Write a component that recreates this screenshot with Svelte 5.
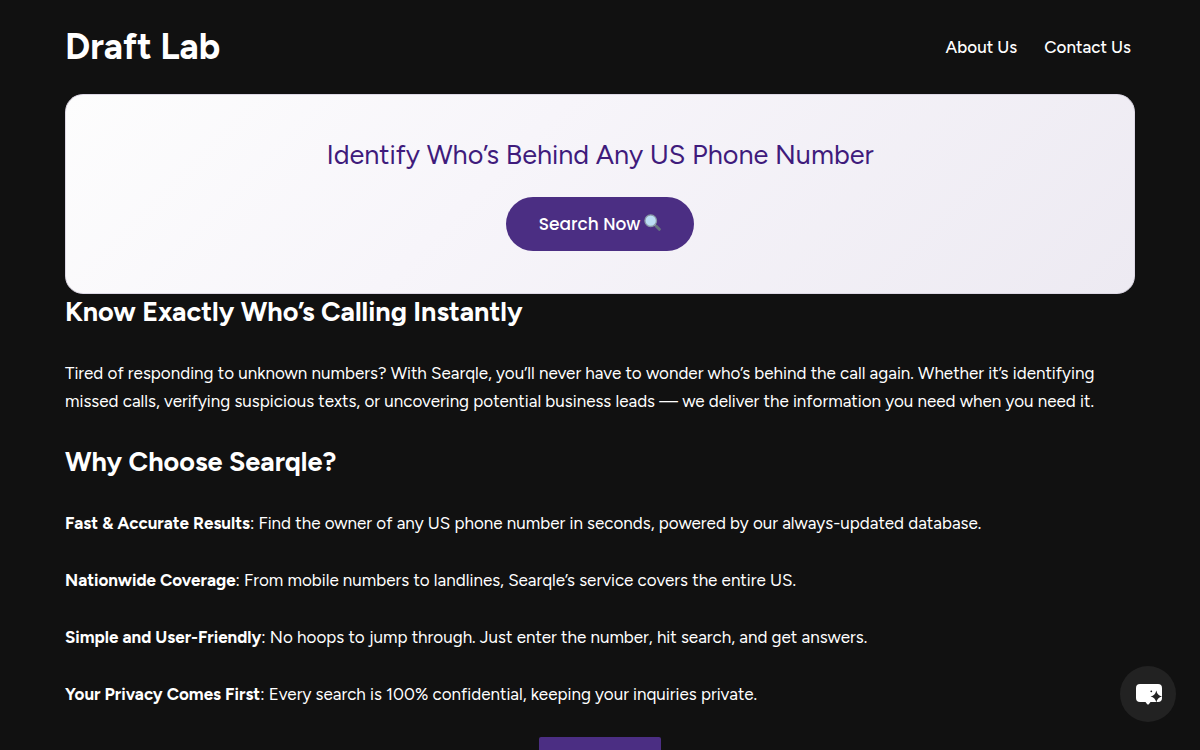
<script>
	const links = [
		{ label: "About Us", href: "#about" },
		{ label: "Contact Us", href: "#contact" }
	];

	const reasons = [
		{ title: "Fast & Accurate Results", text: "Find the owner of any US phone number in seconds, powered by our always-updated database." },
		{ title: "Nationwide Coverage", text: "From mobile numbers to landlines, Searqle’s service covers the entire US." },
		{ title: "Simple and User-Friendly", text: "No hoops to jump through. Just enter the number, hit search, and get answers." },
		{ title: "Your Privacy Comes First", text: "Every search is 100% confidential, keeping your inquiries private." }
	];

	let chatOpen = false;
</script>

<div class="page">
	<header>
		<a class="brand" href="#home">Draft Lab</a>
		<nav>
			{#each links as link}
				<a href={link.href}>{link.label}</a>
			{/each}
		</nav>
	</header>

	<main>
		<section class="banner">
			<p class="tagline">Identify Who’s Behind Any US Phone Number</p>
			<a class="search" href="#search">
				Search Now
				<svg width="17" height="20" viewBox="0 0 17 20" aria-hidden="true">
					<path d="M10.500 10.500l2 2" stroke="#9aa3ac" stroke-width="2" />
					<path d="M12.300 12.300l3 3" stroke="#66757f" stroke-width="3" stroke-linecap="round" />
					<circle cx="6.700" cy="6.700" r="5.800" fill="#bbddf5" stroke="#8899a6" stroke-width="1.300" />
				</svg>
			</a>
		</section>

		<article>
			<h2>Know Exactly Who’s Calling Instantly</h2>
			<p>
				Tired of responding to unknown numbers? With Searqle, you’ll never have to wonder who’s behind the call again. Whether it’s identifying missed calls, verifying suspicious texts, or uncovering potential business leads — we deliver the information you need when you need it.
			</p>
			<h2>Why Choose Searqle?</h2>
			{#each reasons as reason}
				<p><strong>{reason.title}</strong>: {reason.text}</p>
			{/each}
			<a class="cta" href="#search" aria-label="Search"></a>
		</article>
	</main>

	<button class="chat" aria-label="Chat" aria-expanded={chatOpen} on:click={() => { chatOpen = !chatOpen; }}>
		<svg width="28" height="24" viewBox="0 0 28 24" aria-hidden="true">
			<path fill="#fff" d="M6 2h18a4 4 0 0 1 4 4v10a4 4 0 0 1-4 4h-7.500l-1.500 2q-1 1.200-2 0l-1.500-2H6a4 4 0 0 1-4-4V6a4 4 0 0 1 4-4z" />
			<path fill="#222" d="M22.300 8.500q1 5 5.700 6q-4.700 1-5.700 6q-1-5-5.700-6q4.700-1 5.700-6z" />
			<circle cx="17.300" cy="9.300" r="0.900" fill="#222" />
		</svg>
	</button>
</div>

<style>
	:global(body) {
		margin: 0;
		background: #111;
	}

	.page {
		max-width: 1070px;
		margin: 0 auto;
		padding: 0 65px;
		color: #fff;
		font-family: "Figtree", "Lato", sans-serif;
		font-size: 17px;
		line-height: 28px;
	}

	a {
		color: inherit;
		text-decoration: none;
	}

	header {
		display: flex;
		align-items: center;
		justify-content: space-between;
		padding: 24px 4px 24px 0;
	}

	.brand {
		font-size: 36px;
		font-weight: 700;
		line-height: 46px;
	}

	nav {
		display: flex;
		gap: 27px;
		font-weight: 500;
	}

	.banner {
		display: flex;
		flex-direction: column;
		align-items: center;
		gap: 24px;
		padding: 42px 20px;
		border: 1px solid #ddd8e5;
		border-radius: 18px;
		background: linear-gradient(135deg, #fdfdfd, #f7f5fa 40%, #edeaf2);
	}

	.tagline {
		margin: 0;
		color: #3f1b7c;
		font-size: 27px;
		line-height: 36px;
	}

	.search {
		display: flex;
		align-items: center;
		gap: 4px;
		padding: 13px 33px;
		border-radius: 30px;
		background: #4b2e83;
		font-family: "Poppins", "Inter", sans-serif;
		font-weight: 500;
	}

	article {
		display: flex;
		flex-direction: column;
		gap: 29px;
	}

	h2 {
		margin: 0;
		font-size: 27px;
		font-weight: 700;
		line-height: 36px;
	}

	article p {
		margin: 0;
	}

	.cta {
		align-self: center;
		width: 122px;
		height: 50px;
		border-radius: 2px;
		background: #4b2e83;
	}

	.chat {
		position: fixed;
		right: 24px;
		bottom: 28px;
		display: flex;
		align-items: center;
		justify-content: center;
		width: 56px;
		height: 56px;
		padding: 0;
		border: none;
		border-radius: 50%;
		background: #222;
		cursor: pointer;
	}
</style>
